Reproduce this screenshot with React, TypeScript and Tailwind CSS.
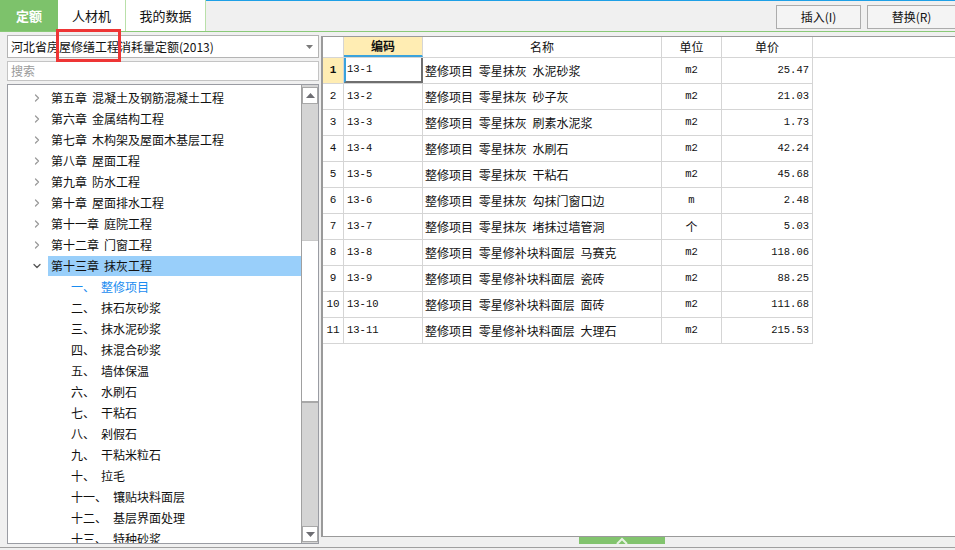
import { ChevronDown, ChevronRight } from 'lucide-react';

const cjk = { fontFamily: '"Noto Sans CJK SC", "Liberation Sans", sans-serif' };
const mono = { fontFamily: '"Liberation Mono", "Noto Sans CJK SC", monospace' };

const chapters = [
    ['第五章', '混凝土及钢筋混凝土工程'],
    ['第六章', '金属结构工程'],
    ['第七章', '木构架及屋面木基层工程'],
    ['第八章', '屋面工程'],
    ['第九章', '防水工程'],
    ['第十章', '屋面排水工程'],
    ['第十一章', '庭院工程'],
    ['第十二章', '门窗工程'],
];

const sections = [
    ['一、', '整修项目'],
    ['二、', '抹石灰砂浆'],
    ['三、', '抹水泥砂浆'],
    ['四、', '抹混合砂浆'],
    ['五、', '墙体保温'],
    ['六、', '水刷石'],
    ['七、', '干粘石'],
    ['八、', '剁假石'],
    ['九、', '干粘米粒石'],
    ['十、', '拉毛'],
    ['十一、', '镶贴块料面层'],
    ['十二、', '基层界面处理'],
    ['十三、', '特种砂浆'],
];

const rows = [
    ['13-1', '整修项目 零星抹灰 水泥砂浆', 'm2', '25.47'],
    ['13-2', '整修项目 零星抹灰 砂子灰', 'm2', '21.03'],
    ['13-3', '整修项目 零星抹灰 刷素水泥浆', 'm2', '1.73'],
    ['13-4', '整修项目 零星抹灰 水刷石', 'm2', '42.24'],
    ['13-5', '整修项目 零星抹灰 干粘石', 'm2', '45.68'],
    ['13-6', '整修项目 零星抹灰 勾抹门窗口边', 'm', '2.48'],
    ['13-7', '整修项目 零星抹灰 堵抹过墙管洞', '个', '5.03'],
    ['13-8', '整修项目 零星修补块料面层 马赛克', 'm2', '118.06'],
    ['13-9', '整修项目 零星修补块料面层 瓷砖', 'm2', '88.25'],
    ['13-10', '整修项目 零星修补块料面层 面砖', 'm2', '111.68'],
    ['13-11', '整修项目 零星修补块料面层 大理石', 'm2', '215.53'],
];

function Triangle({ up }: { up?: boolean }) {
    return (
        <svg width="9" height="5" viewBox="0 0 9 5">
            <path d={up ? 'M0 5 L4.5 0 L9 5 Z' : 'M0 0 L9 0 L4.5 5 Z'} fill="#6e6e73" />
        </svg>
    );
}

function TopBar() {
    return (
        <div className="flex h-[31px]" style={cjk}>
            <div className="w-[58px] bg-[#7dc26b] flex items-center justify-center text-white font-bold text-[13px]">定额</div>
            <div className="w-[68px] bg-white border-r border-[#b9e0a9] flex items-center justify-center text-[13px] text-[#111]">人材机</div>
            <div className="w-[80px] bg-white border-r border-[#b9e0a9] flex items-center justify-center text-[13px] text-[#111]">我的数据</div>
            <div className="flex-1 border-t border-[#1ea0e6] flex justify-end items-start pt-[4px] gap-[6px]">
                <button className="w-[85px] h-[24px] border border-[#acacac] bg-[#f4f4f4] text-[12px] text-[#111]">插入(I)</button>
                <button className="w-[88px] h-[24px] border border-[#acacac] border-r-0 bg-[#f4f4f4] text-[12px] text-[#111]">替换(R)</button>
            </div>
        </div>
    );
}

function Tree() {
    return (
        <div className="mt-[3px] h-[460px] border border-[#9a9ca3] bg-white flex">
            <div className="flex-1 overflow-hidden pt-[2px] text-[12px] text-[#111]" style={cjk}>
                {chapters.map(([no, name]) => (
                    <div key={no} className="flex items-center h-[21px]">
                        <div className="w-[40px] flex justify-end pr-[5px]">
                            <ChevronRight className="w-[12px] h-[12px] text-[#9a9a9a]" strokeWidth={2.5} />
                        </div>
                        <div className="flex-1 h-[20px] flex items-center pl-[3px] whitespace-nowrap">
                            <span className="mr-[5px]">{no}</span>
                            <span>{name}</span>
                        </div>
                    </div>
                ))}
                <div className="flex items-center h-[21px]">
                    <div className="w-[40px] flex justify-end pr-[5px]">
                        <ChevronDown className="w-[12px] h-[12px] text-[#555]" strokeWidth={2.5} />
                    </div>
                    <div className="flex-1 h-[20px] flex items-center pl-[3px] bg-[#99cffa] whitespace-nowrap">
                        <span className="mr-[5px]">第十三章</span>
                        <span>抹灰工程</span>
                    </div>
                </div>
                {sections.map(([no, name], i) => (
                    <div
                        key={no}
                        className={`flex items-center h-[21px] pl-[63px] whitespace-nowrap ${i === 0 ? 'text-[#1a8cf0]' : ''}`}
                    >
                        <span className="mr-[6px]">{no}</span>
                        <span>{name}</span>
                    </div>
                ))}
            </div>
            {/* scrollbar */}
            <div className="w-[17px] bg-[#d4d4d4] border-l border-[#a0a0a0] flex flex-col">
                <div className="mt-[2px] h-[17px] bg-white border border-[#a8a8a8] flex items-center justify-center">
                    <Triangle up />
                </div>
                <div className="h-[136px]" />
                <div className="h-[163px] bg-white border-t border-[#c8c8c8] border-b-2 border-b-[#a8a8a8]" />
                <div className="flex-1" />
                <div className="h-[16px] mb-[1px] bg-white border border-[#a8a8a8] flex items-center justify-center">
                    <Triangle />
                </div>
            </div>
        </div>
    );
}

function LeftPanel() {
    return (
        <div className="w-[321px] pl-[7px] pr-[2px] pt-[3px] flex flex-col">
            <div className="h-[23px] bg-white border border-[#b4b4b4] flex items-center pl-[3px] pr-[5px]" style={cjk}>
                <span className="flex-1 text-[12px] text-[#111] whitespace-nowrap">河北省房屋修缮工程消耗量定额(2013)</span>
                <svg width="7" height="4" viewBox="0 0 7 4">
                    <path d="M0 0 L7 0 L3.5 4 Z" fill="#7a7a7a" />
                </svg>
            </div>
            <div className="mt-[3px] h-[20px] bg-white border border-[#c4c4c4] flex items-center pl-[3px] text-[12px] text-[#9a9a9a]" style={cjk}>
                搜索
            </div>
            <Tree />
        </div>
    );
}

function Grid() {
    return (
        <div className="flex-1 mt-[4px] h-[501px] bg-white border-l-2 border-t border-b border-[#9a9a9a]">
            <div className="flex h-[21px] border-b border-[#d5d5d5] text-[12px] text-[#111]" style={cjk}>
                <div className="w-[21px] border-r border-[#d5d5d5]" />
                <div className="w-[79px] border-r border-[#d5d5d5] bg-[#ffedb3] border-b-2 border-b-[#3aa3dc] flex items-center justify-center font-bold">编码</div>
                <div className="w-[239px] border-r border-[#d5d5d5] flex items-center justify-center">名称</div>
                <div className="w-[60px] border-r border-[#d5d5d5] flex items-center justify-center">单位</div>
                <div className="w-[91px] border-r border-[#d5d5d5] flex items-center justify-center">单价</div>
            </div>
            {rows.map(([code, name, unit, price], i) => (
                <div key={code} className="flex h-[26px] w-[490px] border-b border-[#d5d5d5] text-[#111]">
                    <div
                        className={`w-[21px] border-r border-[#d5d5d5] flex items-center justify-center text-[11px] ${i === 0 ? 'bg-[#ffedb3] font-bold' : ''}`}
                        style={mono}
                    >
                        {i + 1}
                    </div>
                    <div
                        className={`w-[79px] flex items-center text-[10.5px] ${i === 0 ? 'border-l-2 border-l-[#3aa3dc] border-r-2 border-r-[#6f6f6f] border-b-2 border-b-[#6f6f6f] pl-[1px]' : 'border-r border-[#d5d5d5] pl-[3px]'}`}
                        style={mono}
                    >
                        {code}
                    </div>
                    <div className="w-[239px] border-r border-[#d5d5d5] flex items-center pl-[2px] text-[12px] whitespace-nowrap [word-spacing:3px]" style={cjk}>
                        {name}
                    </div>
                    <div
                        className={`w-[60px] border-r border-[#d5d5d5] flex items-center justify-center ${unit === '个' ? 'text-[12px]' : 'text-[10.5px]'}`}
                        style={unit === '个' ? cjk : mono}
                    >
                        {unit}
                    </div>
                    <div className="w-[91px] border-r border-[#d5d5d5] flex items-center justify-end pr-[3px] text-[10.5px]" style={mono}>
                        {price}
                    </div>
                </div>
            ))}
        </div>
    );
}

export default function App() {
    return (
        <div className="relative w-[955px] h-[550px] overflow-hidden bg-[#f0f0f0]">
            <TopBar />
            <div className="h-px bg-[#8ac978]" />
            <div className="flex h-[515px]">
                <LeftPanel />
                <Grid />
            </div>
            <div className="h-px bg-[#a0a0a0]" />

            {/* splitter handle */}
            <div className="absolute left-[579px] top-[537px] w-[86px] h-[7px] bg-[#82c46e] flex justify-center items-start">
                <svg width="14" height="7" viewBox="0 0 14 7">
                    <path d="M2 7 L7 2 L12 7" stroke="#ffffff" strokeWidth="2" fill="none" opacity="0.8" />
                </svg>
            </div>

            {/* red highlight annotation */}
            <div className="absolute left-[56px] top-[29px] w-[65px] h-[33px] border-[3px] border-[#ee3535]" />
        </div>
    );
}
